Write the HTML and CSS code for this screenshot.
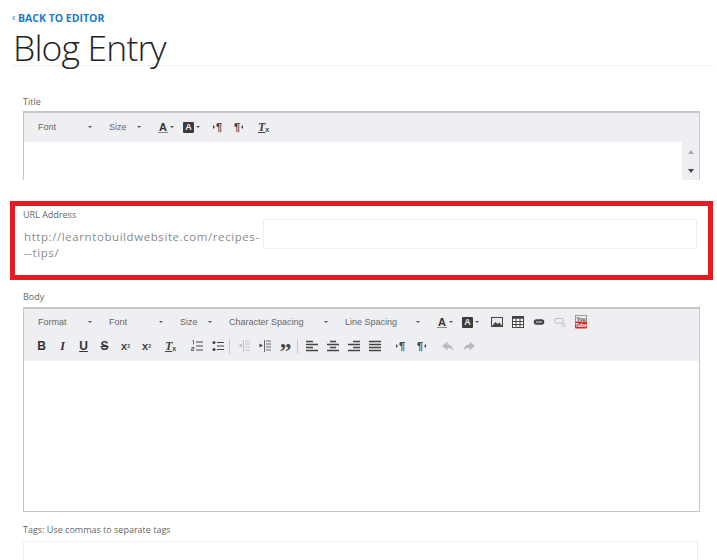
FILE: index.html
```html
<!DOCTYPE html>
<html lang="en">
<head>
<meta charset="utf-8">
<title>Blog Entry</title>
<link rel="stylesheet" href="styles.css">
</head>
<body>
<svg class="defs" width="0" height="0" aria-hidden="true">
  <symbol id="ic-ol" viewBox="0 0 12 12"><path d="M5 2h7M5 6h7M5 10h7" stroke="currentColor" stroke-width="1.2"/><path d="M1.500 .5h1v4M.5 7.500h2.500v1.500h-2.500v1.500h2.500" fill="none" stroke="currentColor" stroke-width=".8"/></symbol>
  <symbol id="ic-ul" viewBox="0 0 12 12"><path d="M5 2.500h7M5 6h7M5 9.500h7" stroke="currentColor" stroke-width="1.200"/><circle cx="2" cy="2.500" r="1.500" fill="currentColor"/><circle cx="2" cy="9.500" r="1.500" fill="currentColor"/></symbol>
  <symbol id="ic-out" viewBox="0 0 12 12"><path d="M7 1h5M7 4h5M7 7h5M7 10h5M5.500 0v12" stroke="currentColor" stroke-width=".8"/><path d="M4 3.500v4L.5 5.500z" fill="currentColor"/></symbol>
  <symbol id="ic-in" viewBox="0 0 12 12"><path d="M7 1h5M7 4h5M7 7h5M7 10h5M5.500 0v12" stroke="currentColor" stroke-width=".8"/><path d="M.5 3.500v4L4 5.500z" fill="currentColor"/></symbol>
  <symbol id="ic-left" viewBox="0 0 12 12"><path d="M0 1.500h7M0 4.500h12M0 7.500h7M0 10.500h12" stroke="currentColor" stroke-width="1.300"/></symbol>
  <symbol id="ic-center" viewBox="0 0 12 12"><path d="M3 1.500h6M0 4.500h12M3 7.500h6M0 10.500h12" stroke="currentColor" stroke-width="1.300"/></symbol>
  <symbol id="ic-right" viewBox="0 0 12 12"><path d="M5 1.500h7M0 4.500h12M5 7.500h7M0 10.500h12" stroke="currentColor" stroke-width="1.300"/></symbol>
  <symbol id="ic-just" viewBox="0 0 12 12"><path d="M0 1.500h12M0 4.500h12M0 7.500h12M0 10.500h12" stroke="currentColor" stroke-width="1.500"/></symbol>
  <symbol id="ic-undo" viewBox="0 0 12 12"><path d="M5.500 1.500 0 6l5.500 4.500V8C8 8 10 8.500 11.500 10.500 11 7 9 4.500 5.500 4.200z" fill="currentColor"/></symbol>
  <symbol id="ic-redo" viewBox="0 0 12 12"><path d="M6.500 1.500 12 6l-5.500 4.500V8C4 8 2 8.500.5 10.500 1 7 3 4.500 6.500 4.200z" fill="currentColor"/></symbol>
  <symbol id="ic-image" viewBox="0 0 12 12"><rect x=".5" y="1.500" width="11" height="9" fill="#e8e8e8" stroke="currentColor"/><path d="M1 10 4.500 6l2 2 2-1.500L11 10z" fill="currentColor"/></symbol>
  <symbol id="ic-table" viewBox="0 0 12 12"><rect x=".5" y=".5" width="11" height="11" fill="#fff" stroke="currentColor"/><path d="M0 1.500h12" stroke="currentColor" stroke-width="2.500"/><path d="M4 2v10M8 2v10M0 5.500h12M0 8.500h12" stroke="currentColor"/></symbol>
  <symbol id="ic-link" viewBox="0 0 12 12"><rect x=".7" y="3.200" width="10.600" height="5.600" rx="2.800" fill="currentColor"/><path d="M3 6h6" stroke="#ddd" stroke-width="1"/></symbol>
  <symbol id="ic-unlink" viewBox="0 0 12 12"><rect x=".5" y="2.500" width="9" height="4.500" rx="2.200" fill="none" stroke="currentColor"/><path d="m7.500 7 4 4m0-4-4 4" stroke="currentColor"/></symbol>
</svg>

<main class="page">
  <a class="back" href="#"><span class="chev">‹</span>BACK TO EDITOR</a>
  <h1 class="heading">Blog Entry</h1>

  <section class="field field-title">
    <label class="label">Title</label>
    <div class="editor editor-short">
      <div class="toolbar">
        <div class="row row-combos">
          <span class="combo w71"><span>Font</span><i class="arrow"></i></span>
          <span class="combo w49"><span>Size</span><i class="arrow"></i></span>
          <span class="tool color"><b class="fore">A</b><i class="arrow"></i></span>
          <span class="tool color"><b class="back-a">A</b><i class="arrow"></i></span>
          <span class="tool pil"><i class="tri tri-r"></i>¶</span>
          <span class="tool pil-b"><span>¶</span><i class="tri tri-l"></i></span>
          <span class="tool tx tx-gap"><b>T</b><sub>x</sub></span>
        </div>
      </div>
      <div class="content">
        <div class="scroll"><i class="sc-up"></i><i class="sc-down"></i></div>
      </div>
    </div>
  </section>

  <section class="url-box">
    <label class="label">URL Address</label>
    <div class="url-row">
      <div class="url-prefix">http://learntobuildwebsite.com/recipes-<br>--tips/</div>
      <input class="input url-input" type="text" aria-label="URL Address">
    </div>
  </section>

  <section class="field field-body">
    <label class="label">Body</label>
    <div class="editor editor-tall">
      <div class="toolbar toolbar-two">
        <div class="row row-combos">
          <span class="combo w71"><span>Format</span><i class="arrow"></i></span>
          <span class="combo w71"><span>Font</span><i class="arrow"></i></span>
          <span class="combo w49"><span>Size</span><i class="arrow"></i></span>
          <span class="combo w116"><span>Character Spacing</span><i class="arrow"></i></span>
          <span class="combo w92"><span>Line Spacing</span><i class="arrow"></i></span>
          <span class="tool color"><b class="fore">A</b><i class="arrow"></i></span>
          <span class="tool color"><b class="back-a">A</b><i class="arrow"></i></span>
          <span class="tool ins"><svg class="ic"><use href="#ic-image"/></svg></span>
          <span class="tool"><svg class="ic"><use href="#ic-table"/></svg></span>
          <span class="tool"><svg class="ic"><use href="#ic-link"/></svg></span>
          <span class="tool off"><svg class="ic"><use href="#ic-unlink"/></svg></span>
          <span class="tool"><svg class="ic ic-tall" viewBox="0 0 12 14"><rect x=".5" y=".5" width="11" height="7" fill="#eee" stroke="#999"/><rect y="6.500" width="12" height="7" rx="1" fill="#d9292e"/><text x="6" y="5.500" class="yt-you">You</text><text x="6" y="12" class="yt-tube">Tube</text></svg></span>
        </div>
        <div class="row row-tools">
          <span class="tool t-text"><b>B</b></span>
          <span class="tool t-text"><b><em>I</em></b></span>
          <span class="tool t-text"><b><u>U</u></b></span>
          <span class="tool t-text"><b><s>S</s></b></span>
          <span class="tool t-x"><b>x</b><sub>2</sub></span>
          <span class="tool t-x"><b>x</b><sup>2</sup></span>
          <span class="tool tx gap-3"><b>T</b><sub>x</sub></span>
          <span class="tool gap-5"><svg class="ic"><use href="#ic-ol"/></svg></span>
          <span class="tool"><svg class="ic"><use href="#ic-ul"/></svg></span>
          <i class="sep"></i>
          <span class="tool off"><svg class="ic"><use href="#ic-out"/></svg></span>
          <span class="tool"><svg class="ic"><use href="#ic-in"/></svg></span>
          <span class="tool quote">”</span>
          <i class="sep"></i>
          <span class="tool"><svg class="ic"><use href="#ic-left"/></svg></span>
          <span class="tool"><svg class="ic"><use href="#ic-center"/></svg></span>
          <span class="tool"><svg class="ic"><use href="#ic-right"/></svg></span>
          <span class="tool"><svg class="ic"><use href="#ic-just"/></svg></span>
          <span class="tool pil gap-5"><i class="tri tri-r"></i>¶</span>
          <span class="tool pil-b"><span>¶</span><i class="tri tri-l"></i></span>
          <span class="tool off gap-5"><svg class="ic"><use href="#ic-undo"/></svg></span>
          <span class="tool off"><svg class="ic"><use href="#ic-redo"/></svg></span>
        </div>
      </div>
    </div>
  </section>

  <section class="field field-tags">
    <label class="label">Tags: Use commas to separate tags</label>
    <input class="input tags-input" type="text" aria-label="Tags">
  </section>
</main>
</body>
</html>
```
FILE: styles.css
```css
* { box-sizing: border-box; }
html, body { margin: 0; height: 560px; overflow: hidden; background: #fff; }
body { font-family: "Open Sans", sans-serif; color: #333; }
.defs { position: absolute; }

.page { display: flex; flex-direction: column; height: 560px; overflow: hidden; padding-top: 11px; }

.back {
  display: flex; align-items: center; height: 14px; margin-left: 12px; flex: none;
  font-size: 10.5px; font-weight: 700; color: #1e7cc8; text-decoration: none;
}
.chev { width: 6px; font-size: 11px; font-weight: 400; line-height: 12px; margin-top: -2px; }

.heading {
  margin: 0 3px 0 13px; height: 41px; flex: none;
  font-size: 35.5px; font-weight: 300; line-height: 45px; color: #222;
  letter-spacing: -.85px;
  border-bottom: 1px solid #eee;
}

.label { display: block; font-size: 9px; line-height: 12px; color: #666; }

.field { padding-left: 23px; flex: none; }
.field-title { margin-top: 30px; height: 95px; }
.field-title .label { margin-bottom: 3px; }

.editor { width: 677px; border: 1px solid #c6c6c6; border-top-width: 2px; background: #fff; }
.editor-short { height: 69px; border-bottom: 0; display: flex; flex-direction: column; }
.editor-tall { height: 205px; }

.toolbar { background: #eeeff2; height: 29px; padding-top: 2px; flex: none; }
.toolbar-two { height: 52px; padding-top: 1px; }

.row { display: flex; align-items: center; height: 24px; font-family: "Liberation Sans", sans-serif; font-size: 9px; color: #666; }
.row-combos { padding-left: 14px; }
.row-tools { padding-left: 7px; }

.combo { display: flex; align-items: center; justify-content: space-between; padding-right: 17px; height: 100%; }
.w71 { width: 71px; }
.w49 { width: 49px; }
.w116 { width: 116px; }
.w92 { width: 92px; }

.arrow { display: block; width: 0; height: 0; border: 2px solid transparent; border-top: 2px solid #555; border-bottom: 0; }

.tool { display: flex; align-items: center; justify-content: center; flex: none; width: 21px; height: 100%; color: #444; font-size: 11px; line-height: 1; }
.off { color: #b9bbbd; }

.color { width: 25px; gap: 2px; justify-content: flex-start; }
.color + .tool:not(.color) { margin-left: -1px; }
.fore { font-size: 11px; border-bottom: 1.5px solid #888; line-height: 10px; padding: 0 1px; color: #333; }
.back-a { font-size: 9px; background: #3c3c3c; color: #eee; width: 11px; height: 11px; line-height: 11px; text-align: center; border-radius: 1px; }

.tool.pil { font-weight: 700; }
.tool.pil-b { font-weight: 700; }
.tool.ins { margin-left: 8px; }
.tri { display: block; width: 0; height: 0; border: 2px solid transparent; border-right-width: 0; border-left: 2px solid #444; margin-right: 1px; }
.tri-l { border-left-width: 0; border-right: 2px solid #444; margin: 0 0 0 1px; }
.tx-gap { margin-left: 4px; }
.tx b { font-family: "Liberation Serif", serif; font-style: italic; font-size: 12px; text-decoration: underline; }
.tx sub, .t-x sub, .t-x sup { font-size: 7px; font-weight: 700; line-height: 0; }
.tx sub { margin-top: 5px; vertical-align: baseline; }
.t-text { font-size: 12px; color: #333; }
.t-text em { font-family: "Liberation Serif", serif; }
.t-x b { font-size: 11px; }
.t-x sub { vertical-align: -2px; font-size: 5px; }
.t-x sup { vertical-align: 5px; font-size: 5px; }

.gap-3 { margin-left: 3px; }
.gap-5 { margin-left: 5px !important; }

.ic { width: 12px; height: 12px; }
.ic-tall { width: 12px; height: 14px; }
.sep { display: block; width: 1px; height: 15px; background: #c9cacc; margin: 0 3px 0 1px; }
.quote { font-family: "Liberation Serif", serif; font-size: 24px; font-weight: 700; padding-top: 9px; }

.yt-you { font: 700 5px "Liberation Sans", sans-serif; fill: #444; text-anchor: middle; }
.yt-tube { font: 700 5px "Liberation Sans", sans-serif; fill: #fff; text-anchor: middle; }

.content { flex: 1; display: flex; justify-content: flex-end; }
.scroll { width: 17px; background: #eeeff2; display: flex; flex-direction: column; align-items: center; justify-content: space-between; padding: 8px 0 7px; }
.sc-up, .sc-down { display: block; width: 0; height: 0; border: 3.500px solid transparent; }
.sc-up { border-top: 0; border-bottom: 4px solid #a8a8a8; }
.sc-down { border-bottom: 0; border-top: 4px solid #444; }

.url-box {
  width: 703px; height: 79px; margin: 10px 0 0 10px; flex: none;
  border: 5px solid #e51c23;
  padding: 3px 11px 0 8px;
}
.url-row { display: flex; margin-top: -2px; }
.url-prefix { width: 240px; flex: none; padding: 9.500px 0 0 1px; font-size: 11.5px; line-height: 16px; letter-spacing: .58px; color: #8a8a8a; }
.input { display: block; border: 1px solid #eee; background: #fff; border-radius: 2px; padding: 0; }
.url-input { flex: 1; height: 30px; }

.field-body { margin-top: 11px; }
.field-body .label { margin-bottom: 4px; }

.field-tags { margin-top: 12px; }
.field-tags .label { margin-bottom: 5px; }
.tags-input { width: 675px; height: 40px; }
```
